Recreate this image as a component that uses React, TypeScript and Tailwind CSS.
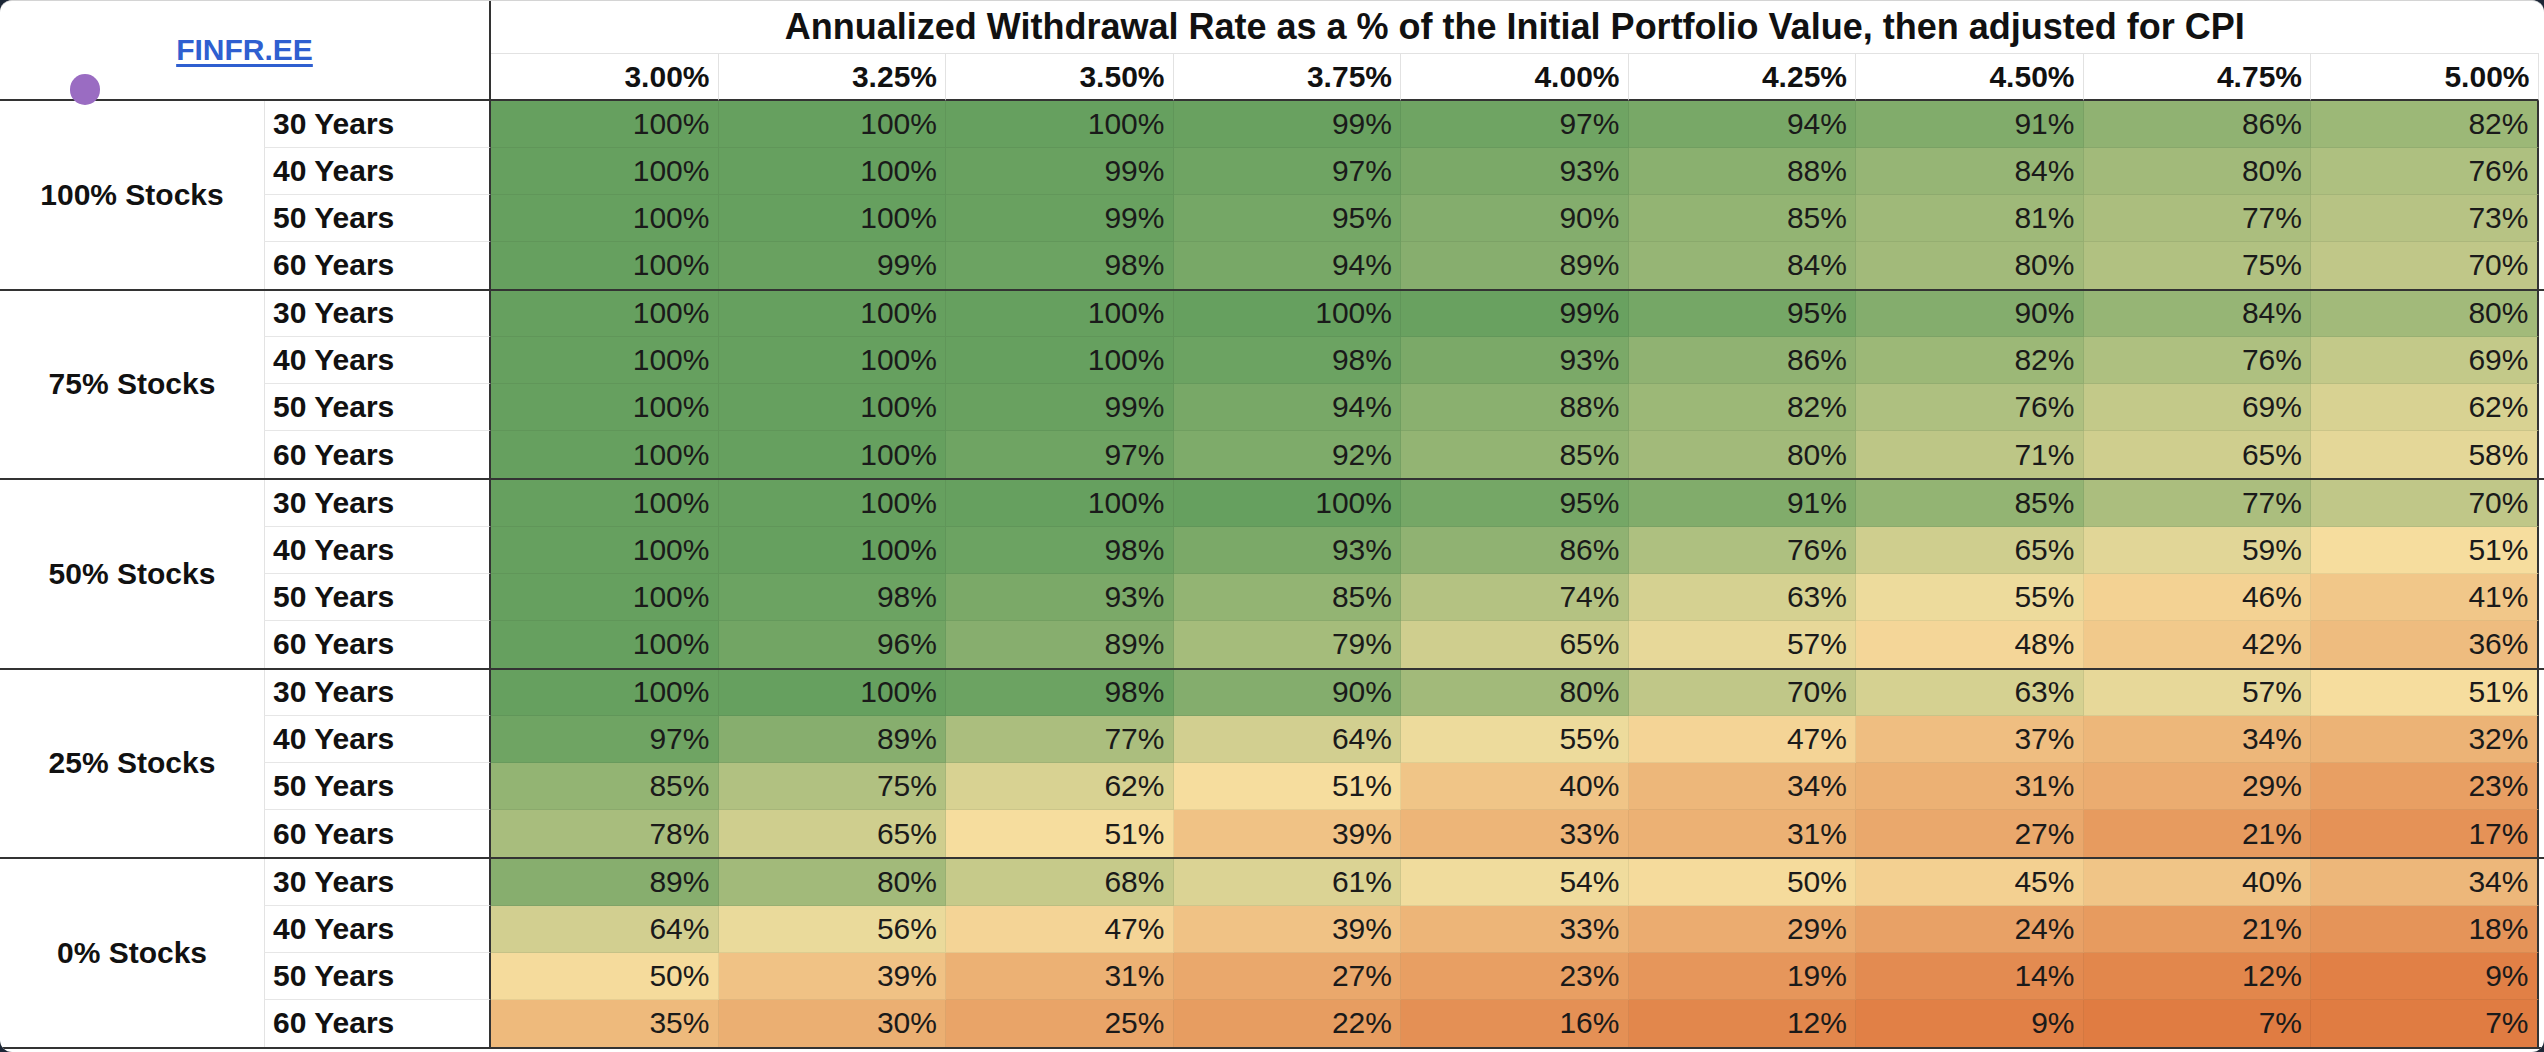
const rates = ['3.00%', '3.25%', '3.50%', '3.75%', '4.00%', '4.25%', '4.50%', '4.75%', '5.00%']
const years = ['30 Years', '40 Years', '50 Years', '60 Years']

const groups: { label: string; rows: number[][] }[] = [
  {
    label: '100% Stocks',
    rows: [
      [100, 100, 100, 99, 97, 94, 91, 86, 82],
      [100, 100, 99, 97, 93, 88, 84, 80, 76],
      [100, 100, 99, 95, 90, 85, 81, 77, 73],
      [100, 99, 98, 94, 89, 84, 80, 75, 70],
    ],
  },
  {
    label: '75% Stocks',
    rows: [
      [100, 100, 100, 100, 99, 95, 90, 84, 80],
      [100, 100, 100, 98, 93, 86, 82, 76, 69],
      [100, 100, 99, 94, 88, 82, 76, 69, 62],
      [100, 100, 97, 92, 85, 80, 71, 65, 58],
    ],
  },
  {
    label: '50% Stocks',
    rows: [
      [100, 100, 100, 100, 95, 91, 85, 77, 70],
      [100, 100, 98, 93, 86, 76, 65, 59, 51],
      [100, 98, 93, 85, 74, 63, 55, 46, 41],
      [100, 96, 89, 79, 65, 57, 48, 42, 36],
    ],
  },
  {
    label: '25% Stocks',
    rows: [
      [100, 100, 98, 90, 80, 70, 63, 57, 51],
      [97, 89, 77, 64, 55, 47, 37, 34, 32],
      [85, 75, 62, 51, 40, 34, 31, 29, 23],
      [78, 65, 51, 39, 33, 31, 27, 21, 17],
    ],
  },
  {
    label: '0% Stocks',
    rows: [
      [89, 80, 68, 61, 54, 50, 45, 40, 34],
      [64, 56, 47, 39, 33, 29, 24, 21, 18],
      [50, 39, 31, 27, 23, 19, 14, 12, 9],
      [35, 30, 25, 22, 16, 12, 9, 7, 7],
    ],
  },
]

// colour scale like the sheet: orange -> pale yellow -> green
const LOW = [224, 124, 66]
const MID = [246, 223, 160]
const HIGH = [102, 160, 95]
const MIN = 7
const MIDV = 52
const MAX = 100

function mix(a: number[], b: number[], t: number) {
  return `rgb(${a.map((v, i) => Math.round(v + (b[i] - v) * t)).join(',')})`
}

function scaleColor(v: number) {
  if (v <= MIDV) return mix(LOW, MID, (v - MIN) / (MIDV - MIN))
  return mix(MID, HIGH, (v - MIDV) / (MAX - MIDV))
}

const cols = 'grid grid-cols-[264px_227px_repeat(9,227.5px)]'

export default function App() {
  return (
    <div className="w-[2544px] h-[1052px] bg-[#1c2636] font-['Liberation_Sans',Arial,sans-serif] text-[#111]">
      <div className="h-full bg-white rounded-[12px] overflow-hidden border-t border-[#d4d4d4]">
        {/* Header */}
        <div className={`${cols} grid-rows-[53px_47px]`}>
          <div className="relative col-span-2 row-span-2 flex items-center justify-center border-r-2 border-b-2 border-[#333]">
            <span className="text-[30px] font-bold leading-none text-[#2f5fd0] underline underline-offset-4">
              FINFR.EE
            </span>
            <span className="absolute left-[70px] top-[73px] z-10 w-[30px] h-[31px] rounded-full bg-[#9a6cc2]" />
          </div>
          <div className="col-span-9 flex items-center justify-center border-b border-[#e2e2e2]">
            <span className="text-[36px] font-bold leading-none">
              Annualized Withdrawal Rate as a % of the Initial Portfolio Value, then adjusted for CPI
            </span>
          </div>
          {rates.map((r) => (
            <div
              key={r}
              className="flex items-center justify-end pr-2 border-r border-b-2 border-r-[#e2e2e2] border-b-[#333]"
            >
              <span className="text-[30px] font-bold leading-none">{r}</span>
            </div>
          ))}
        </div>

        {/* Body */}
        {groups.map((g) => (
          <div key={g.label} className={`${cols} grid-rows-4 h-[189.5px] border-b-2 border-[#333]`}>
            <div className="row-span-4 flex items-center justify-center">
              <span className="text-[30px] font-bold leading-none">{g.label}</span>
            </div>
            {g.rows.map((row, ri) => (
              <>
                <div
                  key={`y${ri}`}
                  className={`flex items-center pl-2 border-l border-l-[#e3e3e3] border-r-2 border-r-[#333] ${
                    ri < 3 ? 'border-b border-b-[#e6e6e6]' : ''
                  }`}
                >
                  <span className="text-[30px] font-bold leading-none">{years[ri]}</span>
                </div>
                {row.map((v, ci) => (
                  <div
                    key={`${ri}-${ci}`}
                    style={{ backgroundColor: scaleColor(v) }}
                    className={`flex items-center justify-end pr-2 ${
                      ci === 8 ? 'border-r-2 border-r-[#333]' : 'border-r border-r-black/[0.06]'
                    } ${ri < 3 ? 'border-b border-b-black/[0.06]' : ''}`}
                  >
                    <span className="text-[30px] leading-none text-[#1a1a1a]">{v}%</span>
                  </div>
                ))}
              </>
            ))}
          </div>
        ))}
      </div>
    </div>
  )
}
